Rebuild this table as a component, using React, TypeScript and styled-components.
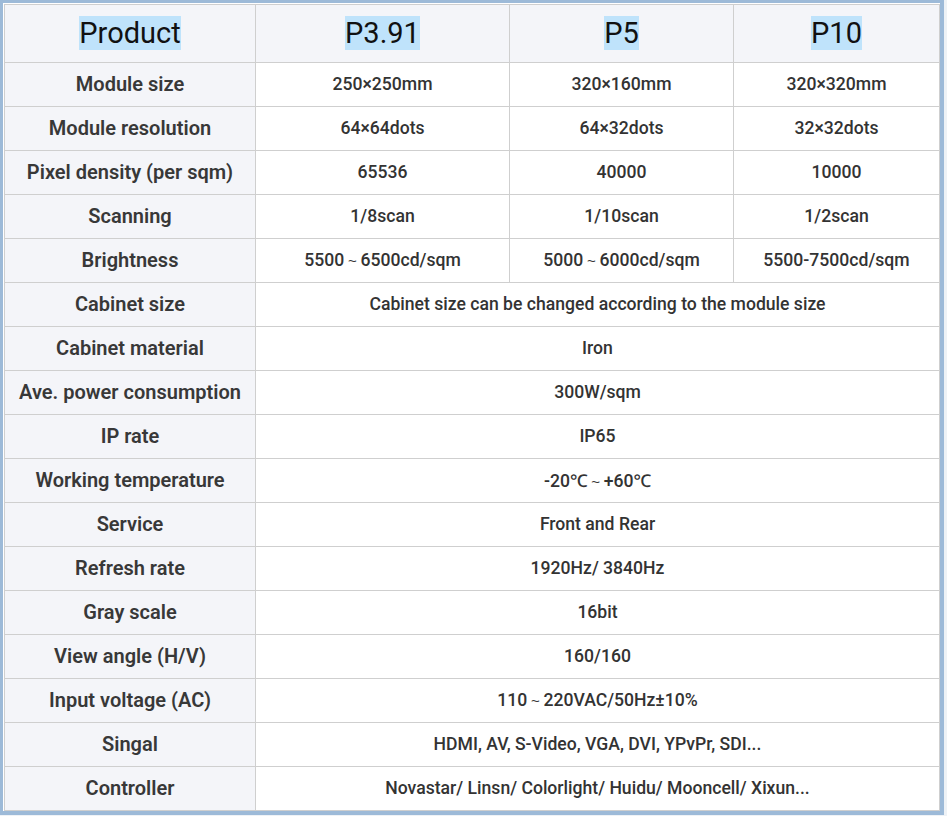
import React from 'react';
import styled, { createGlobalStyle } from 'styled-components';

const GlobalStyle = createGlobalStyle`
  html, body {
    margin: 0;
    padding: 0;
    background: #eef2f6;
  }
  body {
    font-family: Roboto, "Noto Sans", "Noto Sans CJK SC", sans-serif;
  }
`;

const Frame = styled.div`
  display: inline-block;
  border: 3px solid #9dbad8;
  border-right-width: 4px;
  border-bottom-width: 4px;
  background: #ffffff;
`;

const SpecTable = styled.table`
  border-collapse: collapse;
  table-layout: fixed;
  width: 935px;
  margin-left: 1px;
  margin-top: 1px;
`;

const HeadCell = styled.th`
  height: 56px;
  padding: 0 0 1px;
  border: 1px solid #cfcfcf;
  background: #f4f5f9;
  font-weight: 400;
  font-size: 29px;
  color: #111;
  text-align: center;
  vertical-align: middle;
`;

const Marked = styled.span`
  background: #bfe3fb;
`;

const Cell = styled.td<{ $label?: boolean }>`
  height: 42px;
  padding: 0 4px 1px;
  border: 1px solid #cfcfcf;
  background: ${(p) => (p.$label ? '#f4f5f9' : '#ffffff')};
  font-size: ${(p) => (p.$label ? '20px' : '17.6px')};
  font-weight: ${(p) => (p.$label ? 600 : 500)};
  color: ${(p) => (p.$label ? '#383838' : '#333333')};
  text-align: center;
  vertical-align: middle;
  white-space: nowrap;
`;

const Tilde = styled.span`
  font-family: "Liberation Sans", sans-serif;
  font-size: 0.85em;
  margin: 0 0.25em;
`;

type Row = { label: string; values: string[] };

const rows: Row[] = [
  { label: 'Module size', values: ['250×250mm', '320×160mm', '320×320mm'] },
  { label: 'Module resolution', values: ['64×64dots', '64×32dots', '32×32dots'] },
  { label: 'Pixel density (per sqm)', values: ['65536', '40000', '10000'] },
  { label: 'Scanning', values: ['1/8scan', '1/10scan', '1/2scan'] },
  { label: 'Brightness', values: ['5500~6500cd/sqm', '5000~6000cd/sqm', '5500-7500cd/sqm'] },
  { label: 'Cabinet size', values: ['Cabinet size can be changed according to the module size'] },
  { label: 'Cabinet material', values: ['Iron'] },
  { label: 'Ave. power consumption', values: ['300W/sqm'] },
  { label: 'IP rate', values: ['IP65'] },
  { label: 'Working temperature', values: ['-20℃~+60℃'] },
  { label: 'Service', values: ['Front and Rear'] },
  { label: 'Refresh rate', values: ['1920Hz/ 3840Hz'] },
  { label: 'Gray scale', values: ['16bit'] },
  { label: 'View angle (H/V)', values: ['160/160'] },
  { label: 'Input voltage (AC)', values: ['110~220VAC/50Hz±10%'] },
  { label: 'Singal', values: ['HDMI, AV, S-Video, VGA, DVI, YPvPr, SDI...'] },
  { label: 'Controller', values: ['Novastar/ Linsn/ Colorlight/ Huidu/ Mooncell/ Xixun...'] },
];

const products = ['P3.91', 'P5', 'P10'];

// the source uses a small range tilde between numbers
const renderValue = (v: string) => {
  const parts = v.split('~');
  return parts.map((part, i) => (
    <React.Fragment key={i}>
      {i > 0 && <Tilde>~</Tilde>}
      {part}
    </React.Fragment>
  ));
};

export default function App() {
  return (
    <>
      <GlobalStyle />
      <Frame>
        <SpecTable>
          <colgroup>
            <col style={{ width: 251 }} />
            <col style={{ width: 254 }} />
            <col style={{ width: 224 }} />
            <col style={{ width: 206 }} />
          </colgroup>
          <thead>
            <tr>
              <HeadCell>
                <Marked>Product</Marked>
              </HeadCell>
              {products.map((p) => (
                <HeadCell key={p}>
                  <Marked>{p}</Marked>
                </HeadCell>
              ))}
            </tr>
          </thead>
          <tbody>
            {rows.map((r) => (
              <tr key={r.label}>
                <Cell $label>{r.label}</Cell>
                {r.values.length === 1 ? (
                  <Cell colSpan={3}>{renderValue(r.values[0])}</Cell>
                ) : (
                  r.values.map((v, i) => <Cell key={i}>{renderValue(v)}</Cell>)
                )}
              </tr>
            ))}
          </tbody>
        </SpecTable>
      </Frame>
    </>
  );
}
